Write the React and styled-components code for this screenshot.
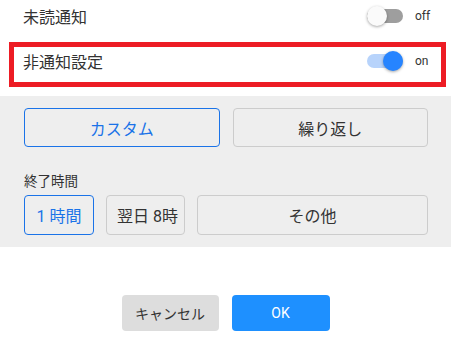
import React, { useState } from 'react'
import styled, { createGlobalStyle } from 'styled-components'

const GRAY_BG = '#eeeeee'
const BLUE = '#1a73e8'

const GlobalStyle = createGlobalStyle`
  html, body {
    margin: 0;
    padding: 0;
    background: #ffffff;
  }
  body {
    font-family: Roboto, "Noto Sans CJK JP", sans-serif;
    color: #333333;
  }
  * {
    box-sizing: border-box;
  }
`

export const Page = styled.div`
  width: 451px;
  height: 355px;
  overflow: hidden;
  background: #ffffff;
`

export const SettingList = styled.div`
  margin-top: -3px;
  display: flex;
  flex-direction: column;
`

export const SettingRow = styled.div`
  height: 45px;
  margin: 0 5px 0 9px;
  padding: 0 6px 7px 9px;
  display: flex;
  align-items: center;
  justify-content: space-between;
  border: 5px solid ${(p) => (p.$highlighted ? '#ed1c24' : 'transparent')};
`

export const SettingLabel = styled.span`
  font-size: 16px;
  color: #333333;
`

export const SwitchGroup = styled.div`
  display: flex;
  align-items: center;
  gap: 12px;
`

export const Track = styled.button`
  position: relative;
  width: 36px;
  height: 14px;
  padding: 0;
  border: none;
  border-radius: 7px;
  cursor: pointer;
  background: ${(p) => (p.$on ? '#b7d3fb' : '#9e9e9e')};
`

export const Knob = styled.span`
  position: absolute;
  top: -3px;
  left: ${(p) => (p.$on ? '16px' : '0')};
  width: 20px;
  height: 20px;
  border-radius: 50%;
  background: ${(p) => (p.$on ? '#2684ff' : '#fafafa')};
  box-shadow: 0 1px 3px rgba(0, 0, 0, 0.35);
`

export const SwitchText = styled.span`
  width: 20px;
  font-size: 12px;
  color: #333333;
`

export const Panel = styled.div`
  margin-top: 9px;
  padding: 12px 23px 12px 24px;
  background: ${GRAY_BG};
`

export const ModeRow = styled.div`
  display: grid;
  grid-template-columns: 1fr 1fr;
  gap: 13px;
`

export const OptionButton = styled.button`
  height: ${(p) => p.$height || 40}px;
  padding: 0 10px;
  border-radius: 4px;
  border: 1px solid ${(p) => (p.$active ? BLUE : '#cccccc')};
  background: transparent;
  color: ${(p) => (p.$active ? BLUE : '#333333')};
  font-family: Roboto, "Noto Sans CJK JP", sans-serif;
  font-size: 16px;
  cursor: pointer;
  white-space: nowrap;
`

export const FieldLabel = styled.div`
  margin: 25px 0 5px;
  font-size: 13.5px;
  line-height: 18px;
  color: #333333;
`

export const EndTimeRow = styled.div`
  display: grid;
  grid-template-columns: 70px 79px 1fr;
  gap: 12px;
`

export const Footer = styled.div`
  margin-top: 48px;
  display: flex;
  justify-content: center;
  gap: 13px;
`

export const DialogButton = styled.button`
  width: ${(p) => (p.$primary ? 98 : 97)}px;
  height: 36px;
  border: none;
  border-radius: 4px;
  background: ${(p) => (p.$primary ? '#1e90ff' : '#dddddd')};
  color: ${(p) => (p.$primary ? '#ffffff' : '#333333')};
  font-family: Roboto, "Noto Sans CJK JP", sans-serif;
  font-size: 14px;
  cursor: pointer;
`

const Switch = ({ on, onToggle }) => (
  <SwitchGroup>
    <Track $on={on} onClick={onToggle} aria-pressed={on}>
      <Knob $on={on} />
    </Track>
    <SwitchText>{on ? 'on' : 'off'}</SwitchText>
  </SwitchGroup>
)

export default function App() {
  const [unread, setUnread] = useState(false)
  const [mute, setMute] = useState(true)
  const [mode, setMode] = useState('custom')
  const [endTime, setEndTime] = useState('1h')

  return (
    <Page>
      <GlobalStyle />
      <SettingList>
        <SettingRow>
          <SettingLabel>未読通知</SettingLabel>
          <Switch on={unread} onToggle={() => setUnread(!unread)} />
        </SettingRow>
        <SettingRow $highlighted>
          <SettingLabel>非通知設定</SettingLabel>
          <Switch on={mute} onToggle={() => setMute(!mute)} />
        </SettingRow>
      </SettingList>

      <Panel>
        <ModeRow>
          <OptionButton $height={39} $active={mode === 'custom'} onClick={() => setMode('custom')}>
            カスタム
          </OptionButton>
          <OptionButton $height={39} $active={mode === 'repeat'} onClick={() => setMode('repeat')}>
            繰り返し
          </OptionButton>
        </ModeRow>

        <FieldLabel>終了時間</FieldLabel>
        <EndTimeRow>
          <OptionButton $active={endTime === '1h'} onClick={() => setEndTime('1h')}>
            1 時間
          </OptionButton>
          <OptionButton $active={endTime === 'tomorrow'} onClick={() => setEndTime('tomorrow')}>
            翌日 8時
          </OptionButton>
          <OptionButton $active={endTime === 'other'} onClick={() => setEndTime('other')}>
            その他
          </OptionButton>
        </EndTimeRow>
      </Panel>

      <Footer>
        <DialogButton>キャンセル</DialogButton>
        <DialogButton $primary>OK</DialogButton>
      </Footer>
    </Page>
  )
}
